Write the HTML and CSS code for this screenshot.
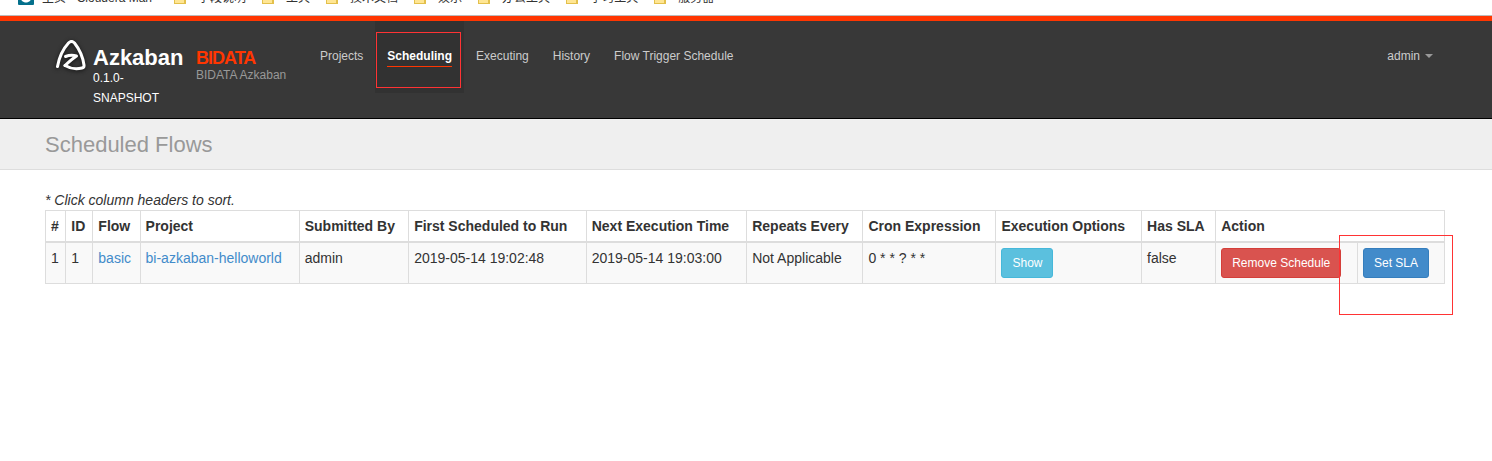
FILE: index.html
```html
<!DOCTYPE html>
<html lang="en">
<head>
  <meta charset="UTF-8">
  <title>Azkaban Web Client</title>
  <link rel="stylesheet" href="styles.css">
</head>
<body>

  <nav class="bookmarks" aria-label="Bookmarks">
    <a href="#" class="bookmark site"><span class="site-icon"></span>主页 - Cloudera Man</a>
    <a href="#" class="bookmark"><span class="folder"></span>字段说明</a>
    <a href="#" class="bookmark"><span class="folder"></span>工具</a>
    <a href="#" class="bookmark"><span class="folder"></span>技术文档</a>
    <a href="#" class="bookmark"><span class="folder"></span>娱乐</a>
    <a href="#" class="bookmark"><span class="folder"></span>办公工具</a>
    <a href="#" class="bookmark"><span class="folder"></span>学习工具</a>
    <a href="#" class="bookmark"><span class="folder"></span>服务器</a>
  </nav>

  <header class="navbar">
    <a href="#" class="logo">
      <svg class="logo-mark" width="36" height="36" viewBox="0 0 36 36" fill="none" stroke="#fff" stroke-width="3" stroke-linecap="round" stroke-linejoin="round">
        <path d="M4.500 28.500 C6 20 10 11 15.500 5 Q18.500 2 21.500 5 C27 12 30 20 31 27 Q31.300 29.500 29 30 C23 31.500 17 30.500 12 27.500"/>
        <path d="M12.500 18.500 Q18 16.500 23.500 18 Q19 21 12 27.500"/>
      </svg>
      <span class="logo-text">
        <span class="logo-name">Azkaban</span>
        <span class="version">0.1.0-SNAPSHOT</span>
      </span>
    </a>
    <div class="instance">
      <strong class="instance-name">BIDATA</strong>
      <span class="instance-label">BIDATA Azkaban</span>
    </div>
    <nav class="menu">
      <a href="#">Projects</a>
      <a href="#" class="active"><span>Scheduling</span></a>
      <a href="#">Executing</a>
      <a href="#">History</a>
      <a href="#">Flow Trigger Schedule</a>
    </nav>
    <button class="user">admin <span class="caret"></span></button>
  </header>

  <div class="page-header">
    <h1>Scheduled Flows</h1>
  </div>

  <main class="content">
    <em class="hint">* Click column headers to sort.</em>
    <table class="flows">
      <thead>
        <tr>
          <th>#</th>
          <th>ID</th>
          <th>Flow</th>
          <th>Project</th>
          <th>Submitted By</th>
          <th>First Scheduled to Run</th>
          <th>Next Execution Time</th>
          <th>Repeats Every</th>
          <th>Cron Expression</th>
          <th>Execution Options</th>
          <th>Has SLA</th>
          <th colspan="2">Action</th>
        </tr>
      </thead>
      <tbody>
        <tr>
          <td>1</td>
          <td>1</td>
          <td><a href="#">basic</a></td>
          <td><a href="#">bi-azkaban-helloworld</a></td>
          <td>admin</td>
          <td>2019-05-14 19:02:48</td>
          <td>2019-05-14 19:03:00</td>
          <td>Not Applicable</td>
          <td>0 * * ? * *</td>
          <td><button class="btn btn-info">Show</button></td>
          <td>false</td>
          <td><button class="btn btn-danger">Remove Schedule</button></td>
          <td class="sla"><button class="btn btn-primary marked">Set SLA</button></td>
        </tr>
      </tbody>
    </table>
  </main>

</body>
</html>
```

FILE: styles.css
```css
* {
  box-sizing: border-box;
}
body {
  margin: 0;
  min-height: 100vh;
  font: 14px/20px "Liberation Sans", Arial, "Noto Sans CJK SC", sans-serif;
  color: #333;
  background: #fff;
}
a {
  color: #428bca;
  text-decoration: none;
}

/* bookmarks, scrolled mostly out of view */
.bookmarks {
  display: flex;
  align-items: flex-end;
  gap: 16px;
  height: 16px;
  padding: 0 18px 9px;
  border-bottom: 1px solid #bbb;
  overflow: hidden;
}
.bookmark {
  display: flex;
  flex: none;
  align-items: flex-end;
  gap: 12px;
  font-size: 12px;
  line-height: 16px;
  color: #333;
}
.bookmark.site {
  gap: 8px;
  margin-right: 6px;
}
.site-icon {
  width: 16px;
  height: 16px;
  margin-bottom: 1px;
  border-radius: 1px;
  background: radial-gradient(circle, #fff 5px, #04708c 6px);
}
.folder {
  width: 12px;
  height: 16px;
  margin-bottom: 2px;
  border: 1px solid #e3c04c;
  border-right-width: 2px;
  background: #ffe694;
}

.navbar {
  display: flex;
  align-items: flex-start;
  height: 103px;
  padding: 0 45px;
  background: #383838;
  border-top: 5px solid #ff3601;
  border-bottom: 1px solid #000;
}
.logo {
  display: flex;
  width: 151px;
  padding: 17px 0 0 8px;
  color: #fff;
}
.logo-mark {
  flex: none;
  margin-right: 4px;
  filter: drop-shadow(0 1px 2px #111);
}
.logo-text {
  padding-top: 10px;
}
.logo-name {
  display: block;
  font-size: 22px;
  font-weight: bold;
}
.version {
  display: block;
  width: 80px;
  font-size: 12px;
}
.instance {
  width: 112px;
  padding-top: 29px;
}
.instance-name {
  display: block;
  font-size: 18px;
  line-height: 17px;
  letter-spacing: -1px;
  color: #ff3601;
}
.instance-label {
  display: block;
  font-size: 12px;
  line-height: 16px;
  color: #999;
}
.menu {
  display: flex;
}
.menu a {
  padding: 25px 12px 26px;
  font-size: 12px;
  color: #ccc;
}
.menu .active {
  position: relative;
  font-weight: bold;
  color: #fff;
  background: #323232;
}
.menu .active span {
  display: block;
  border-bottom: 1px solid #ff3601;
}
.menu .active::after {
  content: "";
  position: absolute;
  inset: 11px 3px 5px 1px;
  border: 1px solid #ff3334;
}
.user {
  display: flex;
  align-items: center;
  gap: 5px;
  margin-left: auto;
  padding: 25px 14px;
  border: 0;
  background: none;
  font: 12px/20px "Liberation Sans", Arial, sans-serif;
  color: #ccc;
}
.caret {
  border: 4px solid transparent;
  border-top-color: #999;
  border-bottom: 0;
}

.page-header {
  padding: 11px 45px 9px;
  background: #efefef;
  border-bottom: 1px solid #ddd;
}
.page-header h1 {
  margin: 0;
  font-size: 22px;
  font-weight: normal;
  line-height: 30px;
  color: #999;
}

.content {
  padding: 20px 47px 0 45px;
}
.hint {
  display: block;
}
.flows {
  width: 100%;
  border-collapse: collapse;
  border: 1px solid #ddd;
}
.flows th,
.flows td {
  padding: 5px;
  border: 1px solid #ddd;
  text-align: left;
  vertical-align: top;
  white-space: nowrap;
}
.flows thead th {
  border-bottom-width: 2px;
}
.flows tbody td {
  background: #f9f9f9;
}
.flows .sla {
  width: 87px;
}
.btn {
  display: inline-block;
  padding: 5px 10px;
  border: 1px solid;
  border-radius: 3px;
  font: 12px/18px "Liberation Sans", Arial, sans-serif;
  color: #fff;
}
.btn-info {
  background: #5bc0de;
  border-color: #46b8da;
}
.btn-danger {
  background: #d9534f;
  border-color: #d43f3a;
}
.btn-primary {
  background: #428bca;
  border-color: #357ebd;
}

/* highlight frame around the button */
.marked {
  position: relative;
}
.marked::after {
  content: "";
  position: absolute;
  inset: -14px -25px -38px -25px;
  border: 1px solid #ff3334;
}
```
